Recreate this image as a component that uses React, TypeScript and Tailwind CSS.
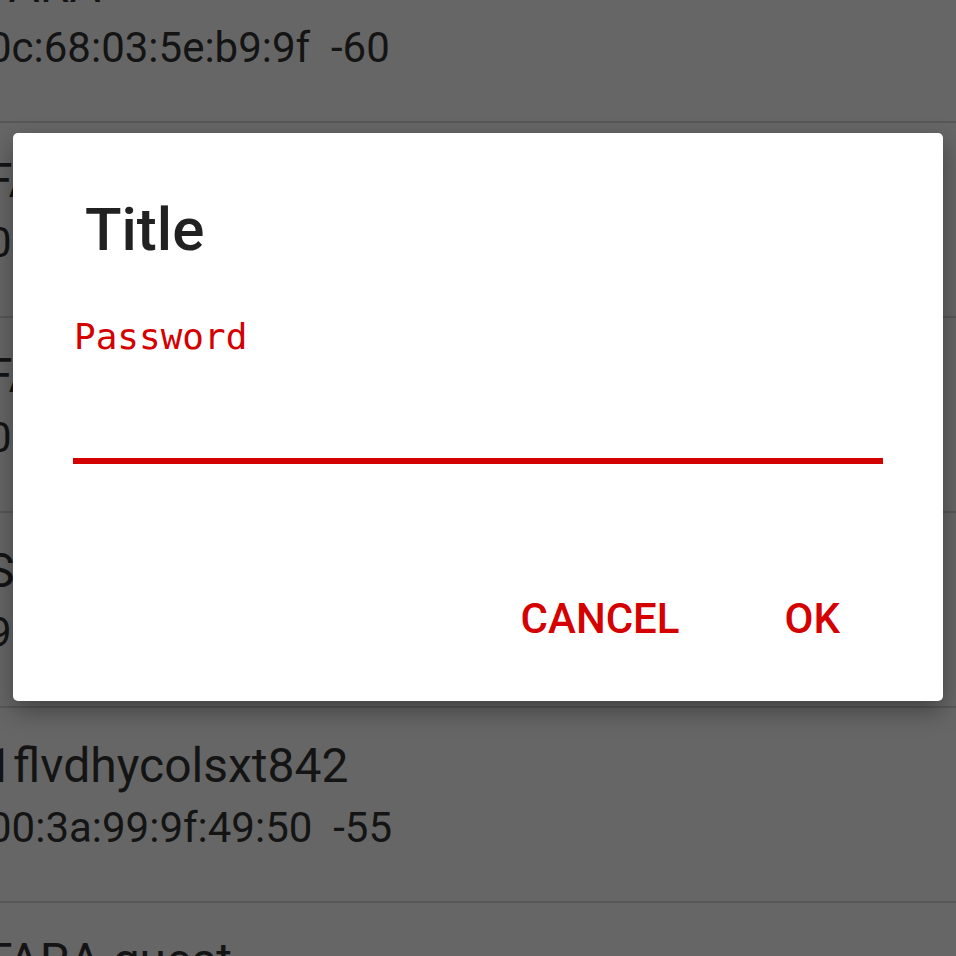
import React from 'react'

type Network = { ssid: string; info: string }

const networks: Network[] = [
  { ssid: 'FARA', info: '0c:68:03:5e:b9:9f  -60' },
  { ssid: 'FARA_5G', info: '0c:68:03:5e:b9:a0  -63' },
  { ssid: 'FARA_ext', info: '0c:68:03:5e:b9:a1  -71' },
  { ssid: 'SKY4F2A1', info: '9c:97:26:11:2f:8a  -78' },
  { ssid: '1flvdhycolsxt842', info: '00:3a:99:9f:49:50  -55' },
  { ssid: 'FARA guest', info: '0e:68:03:5e:b9:9f  -61' },
]

function NetworkRow({ net }: { net: Network }) {
  return (
    <div className="border-b-2 border-[#575757]">
      <div className="h-[193px] -ml-[14px] pt-[28px] text-[#141414] whitespace-pre">
        <div className="text-[48px] leading-[60px]">{net.ssid}</div>
        <div className="mt-[2px] ml-[2px] text-[42px] leading-[60px]">{net.info}</div>
      </div>
    </div>
  )
}

export default function App() {
  return (
    <div
      className="relative h-[956px] w-[956px] overflow-hidden bg-[#666666]"
      style={{ fontFamily: 'Roboto, "Liberation Sans", sans-serif' }}
    >
      {/* list behind the dim */}
      <div className="-mt-[72px]">
        {networks.map((n) => (
          <NetworkRow key={n.ssid} net={n} />
        ))}
      </div>

      {/* dialog */}
      <div className="absolute inset-0 pl-[13px] pt-[133px]">
        <div className="w-[930px] rounded-[5px] bg-white shadow-[0_10px_24px_rgba(0,0,0,0.35)]">
          <div className="pt-[67px] pl-[72px] text-[60px] leading-[60px] font-medium text-[#212121]">
            Title
          </div>
          <div className="px-[60px] pt-[56px]">
            <div
              className="pl-[1px] text-[36px] leading-[42px] text-[#d50000]"
              style={{ fontFamily: '"DejaVu Sans Mono", "Liberation Mono", monospace' }}
            >
              Password
            </div>
            <div className="mt-[100px] h-[6px] bg-[#d50000]" />
          </div>
          <div className="flex justify-end gap-[105px] pr-[103px] pt-[134px] pb-[61px] text-[42px] leading-[42px] font-medium text-[#d50000]">
            <span>CANCEL</span>
            <span>OK</span>
          </div>
        </div>
      </div>
    </div>
  )
}
